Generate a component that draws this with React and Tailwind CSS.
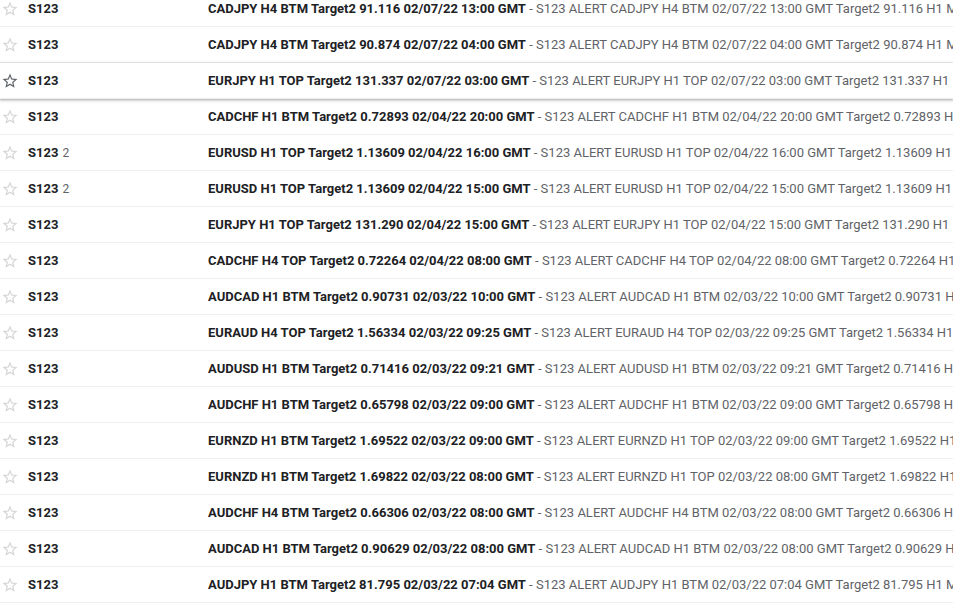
import React from "react";

const rows = [
  { s: "CADJPY H4 BTM Target2 91.116 02/07/22 13:00 GMT", p: "S123 ALERT CADJPY H4 BTM 02/07/22 13:00 GMT Target2 91.116 H1 MACD" },
  { s: "CADJPY H4 BTM Target2 90.874 02/07/22 04:00 GMT", p: "S123 ALERT CADJPY H4 BTM 02/07/22 04:00 GMT Target2 90.874 H1 MACD" },
  { s: "EURJPY H1 TOP Target2 131.337 02/07/22 03:00 GMT", p: "S123 ALERT EURJPY H1 TOP 02/07/22 03:00 GMT Target2 131.337 H1 MACD", hover: true },
  { s: "CADCHF H1 BTM Target2 0.72893 02/04/22 20:00 GMT", p: "S123 ALERT CADCHF H1 BTM 02/04/22 20:00 GMT Target2 0.72893 H1 MACD" },
  { s: "EURUSD H1 TOP Target2 1.13609 02/04/22 16:00 GMT", p: "S123 ALERT EURUSD H1 TOP 02/04/22 16:00 GMT Target2 1.13609 H1 MACD", n: 2 },
  { s: "EURUSD H1 TOP Target2 1.13609 02/04/22 15:00 GMT", p: "S123 ALERT EURUSD H1 TOP 02/04/22 15:00 GMT Target2 1.13609 H1 MACD", n: 2 },
  { s: "EURJPY H1 TOP Target2 131.290 02/04/22 15:00 GMT", p: "S123 ALERT EURJPY H1 TOP 02/04/22 15:00 GMT Target2 131.290 H1 MACD" },
  { s: "CADCHF H4 TOP Target2 0.72264 02/04/22 08:00 GMT", p: "S123 ALERT CADCHF H4 TOP 02/04/22 08:00 GMT Target2 0.72264 H1 MACD" },
  { s: "AUDCAD H1 BTM Target2 0.90731 02/03/22 10:00 GMT", p: "S123 ALERT AUDCAD H1 BTM 02/03/22 10:00 GMT Target2 0.90731 H1 MACD" },
  { s: "EURAUD H4 TOP Target2 1.56334 02/03/22 09:25 GMT", p: "S123 ALERT EURAUD H4 TOP 02/03/22 09:25 GMT Target2 1.56334 H1 MACD" },
  { s: "AUDUSD H1 BTM Target2 0.71416 02/03/22 09:21 GMT", p: "S123 ALERT AUDUSD H1 BTM 02/03/22 09:21 GMT Target2 0.71416 H1 MACD" },
  { s: "AUDCHF H1 BTM Target2 0.65798 02/03/22 09:00 GMT", p: "S123 ALERT AUDCHF H1 BTM 02/03/22 09:00 GMT Target2 0.65798 H1 MACD" },
  { s: "EURNZD H1 BTM Target2 1.69522 02/03/22 09:00 GMT", p: "S123 ALERT EURNZD H1 TOP 02/03/22 09:00 GMT Target2 1.69522 H1 MACD" },
  { s: "EURNZD H1 BTM Target2 1.69822 02/03/22 08:00 GMT", p: "S123 ALERT EURNZD H1 TOP 02/03/22 08:00 GMT Target2 1.69822 H1 MACD" },
  { s: "AUDCHF H4 BTM Target2 0.66306 02/03/22 08:00 GMT", p: "S123 ALERT AUDCHF H4 BTM 02/03/22 08:00 GMT Target2 0.66306 H1 MACD" },
  { s: "AUDCAD H1 BTM Target2 0.90629 02/03/22 08:00 GMT", p: "S123 ALERT AUDCAD H1 BTM 02/03/22 08:00 GMT Target2 0.90629 H1 MACD" },
  { s: "AUDJPY H1 BTM Target2 81.795 02/03/22 07:04 GMT", p: "S123 ALERT AUDJPY H1 BTM 02/03/22 07:04 GMT Target2 81.795 H1 MACD" },
];

function Star({ dark }) {
  return (
    <svg width="18" height="18" viewBox="0 0 24 24" fill={dark ? "#5f6368" : "#d4d6d8"}>
      <path d="M22 9.24l-7.19-.62L12 2 9.19 8.63 2 9.24l5.46 4.73L5.82 21 12 17.27 18.18 21l-1.63-7.03L22 9.24zM12 15.4l-3.76 2.27 1-4.28-3.32-2.88 4.38-.38L12 6.1l1.71 4.04 4.38.38-3.32 2.88 1 4.28L12 15.4z" />
    </svg>
  );
}

export default function App() {
  return (
    <div className="h-[603px] w-[953px] overflow-hidden bg-white font-['Roboto',sans-serif]">
      <div className="-mt-[9px]">
        {rows.map((r, i) => (
          <div
            key={i}
            className={
              "relative flex h-[36px] items-center whitespace-nowrap border-b border-[#eceef0] bg-white " +
              (r.hover ? "z-10 shadow-[0_1px_2px_0_rgba(60,64,67,0.3),0_1px_3px_1px_rgba(60,64,67,0.15)]" : "")
            }
          >
            <div className="flex w-[20px] shrink-0 justify-center">
              <Star dark={r.hover} />
            </div>
            <div className="ml-[8px] w-[180px] shrink-0 text-[13px] text-[#202124]">
              <span className="font-bold">S123</span>
              {r.n && <span className="ml-[4px] text-[12px] text-[#5f6368]">{r.n}</span>}
            </div>
            <div className="min-w-0 flex-1 overflow-hidden text-[13px]">
              <span className="font-bold text-[#202124]">{r.s}</span>
              <span className="text-[#5f6368]"> - {r.p}</span>
            </div>
          </div>
        ))}
      </div>
    </div>
  );
}
